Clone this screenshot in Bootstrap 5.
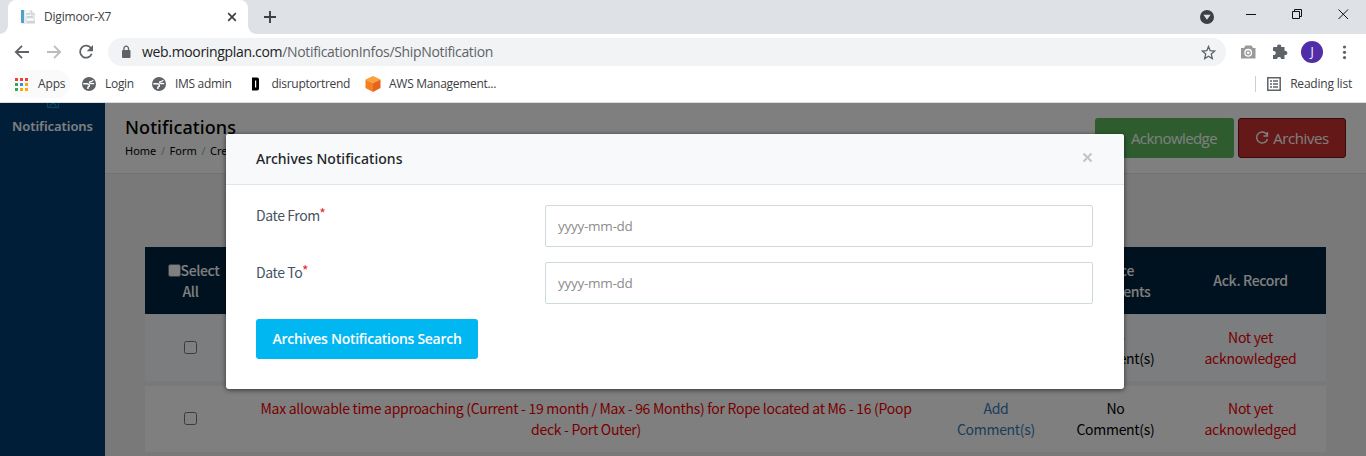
<!DOCTYPE html>
<html lang="en">
<head>
<meta charset="utf-8">
<meta name="viewport" content="width=device-width, initial-scale=1">
<title>Digimoor-X7</title>
<link href="https://cdn.jsdelivr.net/npm/bootstrap@5.3.0/dist/css/bootstrap.min.css" rel="stylesheet">
<style>
  :root { --ui: "Open Sans", "Noto Sans", sans-serif; --src: "Noto Sans CJK SC", "Noto Sans", sans-serif; --noto: "Noto Sans", "Open Sans", sans-serif; }
  html, body { height: 456px; overflow: hidden; }
  body { font-family: var(--src); font-size: 14px; line-height: 21px; color: #000; background: #fff; }
  svg { display: block; flex: none; }

  /* browser chrome */
  .chrome { font-family: var(--ui); font-size: 12px; line-height: 16px; color: #3c4043; height: 103px; border-bottom: 1px solid #dadce0; }
  .tabstrip { height: 34px; background: #dee1e6; padding-left: 8px; }
  .browser-tab { width: 240px; height: 34px; background: #fff; border-radius: 8px 8px 0 0; padding: 0 9px 0 12px; position: relative; }
  .browser-tab::before, .browser-tab::after { content: ""; position: absolute; bottom: 0; width: 8px; height: 8px; }
  .browser-tab::before { left: -8px; background: radial-gradient(circle at 0 0, #dee1e6 7.5px, #fff 8px); }
  .browser-tab::after { right: -8px; background: radial-gradient(circle at 100% 0, #dee1e6 7.5px, #fff 8px); }
  .tab-title { letter-spacing: -.2px; margin-left: 8px; }
  .new-tab { margin: 8px 0 0 15px; }
  .toolbar { height: 36px; }
  .omnibox { width: 1118px; height: 28px; margin-left: 12px; border-radius: 14px; background: #f1f3f4; padding: 0 10px 0 13px; }
  .url { font-size: 14px; color: #202124; margin-left: 11px; letter-spacing: -.33px; white-space: nowrap; }
  .url span { color: #5f6368; }
  .bookmarks { height: 32px; padding: 0 14px 4px; }
  .bookmarks span { white-space: nowrap; letter-spacing: -.3px; margin-left: 9px; }
  .bookmarks .apps-pill span { margin-left: 10px; letter-spacing: -.15px; }
  .apps-pill { width: 62px; height: 28px; border-radius: 14px; margin-left: -6px; padding-left: 7px; background: #fafafb; }
  .avatar { width: 22px; height: 22px; background: #512da8; color: #fff; line-height: 22px; }

  /* application */
  .viewport { position: relative; height: 353px; overflow: hidden; background: #f2f2f2; }
  .sidebar { width: 105px; height: 353px; background: #003c70; color: #fff; font: 600 13px/18px var(--noto); letter-spacing: -.05px; }
  .sidebar svg { margin: -6px auto 8px; }
  .page-head { height: 71px; background: #fff; border-bottom: 1px solid #e4e4e4; padding: 15px 20px 0; }
  .page-title { font: 500 18px/20px var(--noto); margin: -1px 0 0; letter-spacing: .08px; }
  .crumbs { font: 400 11px/16px var(--noto); margin-top: 6px; white-space: nowrap; }
  .crumbs i { font-style: normal; color: #aaa; padding: 0 4.6px; }
  .btn-app { height: 40px; font: 400 15px/20px var(--ui); color: #fff; border-radius: 3px; padding: 0; letter-spacing: -.4px; }
  .btn-ack { width: 139px; background: #5cb85c; letter-spacing: -.57px; }
  .btn-ack span { padding-left: 19px; }
  .btn-arch { width: 108px; background: #ca3030; border: 1px solid #7a1518; }
  .grid-table { width: 1181px; margin: 73px 0 0 40px; letter-spacing: -.29px; }
  .grid-line { display: grid; grid-template-columns: 91px 700px 120px 119px 151px; align-items: center; text-align: center; height: 66px; background: #fff; margin-bottom: 5px; padding-bottom: 1px; }
  .grid-line > div { padding: 0 14px; }
  .grid-head { background: #002440; color: #fff; font-weight: 500; height: 67px; margin-bottom: 1px; padding: 0; letter-spacing: -.36px; }
  .grid-head .pick-all { padding: 0 12px 0 18px; }
  .pick-all span { display: block; margin-left: -6px; }
  .tinted { background: #f9fafc; }
  .late { color: #f00000; }
  .tick { appearance: none; width: 13px; height: 13px; border: 1px solid #767676; border-radius: 2.5px; background: #fff; display: inline-block; vertical-align: -1px; margin: 0; }
  .shade { position: absolute; inset: 0; background: rgba(0,0,0,.5); }

  /* dialog */
  .dialog-box { position: absolute; left: 226px; top: 31px; width: 898px; height: 255px; background: #fff; border-radius: 3px; box-shadow: 0 1px 5px rgba(0,0,0,.6); overflow: hidden; }
  .dialog-head { height: 51px; background: #f8f9fb; border-bottom: 1px solid #e2e5e8; padding: 0 29px 0 30px; font: 500 14px/20px var(--noto); letter-spacing: .04px; color: #212529; }
  .dialog-head svg { margin-bottom: 4px; }
  .dialog-body { padding: 20px 31px 0 30px; }
  .field-line { height: 42px; margin-bottom: 15px; }
  .field-line label { width: 289px; color: #455364; letter-spacing: -.4px; }
  .field-line sup { color: #e8282c; font-size: 14px; top: -2px; line-height: 0; vertical-align: baseline; }
  .field-line input { width: 548px; height: 42px; border: 1px solid #cfdadd; border-radius: 2px; padding: 0 12px; font: 400 13.5px/20px var(--ui); letter-spacing: -.27px; box-shadow: none; }
  .field-line input::placeholder { color: #8b8d8f; opacity: 1; }
  .btn-find { width: 222px; height: 40px; background: #00b7f1; color: #fff; border: 0; border-radius: 3px; font: 600 14px/20px var(--ui); letter-spacing: -.28px; padding: 0; }
</style>
</head>
<body>
<div class="chrome">
  <div class="tabstrip d-flex">
    <div class="browser-tab d-flex align-items-center">
      <svg width="16" height="16" viewBox="0 0 16 16"><path d="M2 1h9l4 4v10H2z" fill="#e4e9ed"/><path d="M1 1h3v13H1z" fill="#4fa0cf"/><path d="M5 1h6v6H5z" fill="#f5f6f7"/><path d="M11 1v4h4" fill="none" stroke="#c5cdd3"/><path d="M6 5h4M7 8h6M7 13h8" fill="none" stroke="#b4bec6"/><path d="M7 9.500h6v2H7z" fill="#fff"/></svg>
      <span class="tab-title">Digimoor-X7</span>
      <svg class="ms-auto" width="14" height="14" viewBox="0 0 14 14"><path d="M3.200 3.200l7.600 7.600M10.800 3.200l-7.600 7.600" stroke="#3c4043" stroke-width="1.700"/></svg>
    </div>
    <svg class="new-tab" width="14" height="17" viewBox="0 0 14 17"><path d="M7 3v12M1 9h12" stroke="#3c4043" stroke-width="1.900"/></svg>
    <div class="ms-auto d-flex">
      <svg width="166" height="34" viewBox="0 0 166 34"><circle cx="7" cy="17" r="7" fill="#3c4043"/><path d="M3.400 14.800h7.200L7 19.800z" fill="#dee1e6"/><g fill="none" stroke="#111" stroke-width="1"><path d="M46 14.500h10M92.500 11.500h7v7h-7zM94.500 11.500v-2h7v7h-2M138.500 9.500l9.500 9.500M148 9.500L138.500 19"/></g></svg>
    </div>
  </div>
  <div class="toolbar d-flex align-items-center">
    <svg width="96" height="28" viewBox="0 0 96 28"><g fill="none" stroke-width="1.800"><path d="M29 14H16.500M22 7.800L15.800 14l6.200 6.200" stroke="#5f6368"/><path d="M47 14h12.500M54 7.800L60.200 14 54 20.200" stroke="#babcbe"/><path d="M91.200 10.500A6 6 0 1 0 91.700 15.800" stroke="#5f6368"/></g><path d="M93 7v6.300h-6.300z" fill="#5f6368"/></svg>
    <div class="omnibox d-flex align-items-center">
      <svg width="10" height="14" viewBox="0 0 10 14"><rect x="1" y="5" width="8.500" height="8" rx="1" fill="#5f6368"/><path d="M2.900 6V3.500a2.300 2.300 0 0 1 4.600 0V6" fill="none" stroke="#5f6368" stroke-width="1.300"/></svg>
      <div class="url">web.mooringplan.com<span>/NotificationInfos/ShipNotification</span></div>
      <svg class="ms-auto" width="15" height="15" viewBox="0 0 15 15"><path d="M7.500 1.500l1.700 4.200 4.500.4-3.400 3 1 4.500-3.800-2.400-3.800 2.400 1-4.500-3.400-3 4.500-.4z" fill="none" stroke="#5f6368" stroke-width="1.300"/></svg>
    </div>
    <svg width="75" height="28" viewBox="0 0 75 28"><path d="M15 10h3l1.500-2.500h6L27 10h2.500v10.500H15z" fill="#999"/><circle cx="22.200" cy="14.800" r="3.300" fill="none" stroke="#fff" stroke-width="1.300"/><circle cx="22.200" cy="14.800" r="1.400" fill="#fff"/><path d="M48 9h3.200a2 2 0 1 1 3.900 0H58.500v3.800a2.200 2.200 0 1 1 0 4.200v4h-3.400a2 2 0 0 0-4 0H47v-4a2.100 2.100 0 1 0 0-4V10a1 1 0 0 1 1-1z" fill="#5f6368"/></svg>
    <div class="avatar rounded-circle text-center">J</div>
    <svg width="43" height="28" viewBox="0 0 43 28"><g fill="#5f6368"><circle cx="21.500" cy="9" r="1.600"/><circle cx="21.500" cy="14.300" r="1.600"/><circle cx="21.500" cy="19.600" r="1.600"/></g></svg>
  </div>
  <div class="bookmarks d-flex align-items-center">
    <div class="apps-pill d-flex align-items-center">
      <svg width="13" height="13" viewBox="0 0 13 13"><path d="M0 0h3v3H0zM5 0h3v3H5zM10 0h3v3h-3z" fill="#ea4335"/><path d="M0 5h3v3H0zM0 10h3v3H0z" fill="#34a853"/><path d="M5 5h3v3H5z" fill="#4285f4"/><path d="M10 5h3v3h-3zM5 10h3v3H5zM10 10h3v3h-3z" fill="#fbab05"/></svg>
      <span>Apps</span>
    </div>
    <svg style="margin-left:12px" width="14" height="14" viewBox="0 0 14 14"><circle cx="7" cy="7" r="7" fill="#5f6368"/><path d="M11.300 3.200Q10 4.800 8 4.600 7 6 8.600 6.500l3.600.2" stroke="#fff" stroke-width="1.300" fill="none"/><path d="M1.300 6.800h3.900q2.800.4 2 2.500Q5.600 9.600 5.900 12" stroke="#fff" stroke-width="1.500" fill="none"/></svg>
    <span>Login</span>
    <svg style="margin-left:18px" width="14" height="14" viewBox="0 0 14 14"><circle cx="7" cy="7" r="7" fill="#5f6368"/><path d="M11.300 3.200Q10 4.800 8 4.600 7 6 8.600 6.500l3.600.2" stroke="#fff" stroke-width="1.300" fill="none"/><path d="M1.300 6.800h3.900q2.800.4 2 2.500Q5.600 9.600 5.900 12" stroke="#fff" stroke-width="1.500" fill="none"/></svg>
    <span>IMS admin</span>
    <svg style="margin-left:20px" width="8" height="14" viewBox="0 0 8 14"><path fill-rule="evenodd" d="M0 .5h5q2 0 2 2v9q0 2-2 2H0zM3 3.500v7h1.200v-7z" fill="#000"/></svg>
    <span style="margin-left:12px">disruptortrend</span>
    <svg style="margin-left:15px" width="16" height="16" viewBox="0 0 16 16"><path d="M8 0l7.500 3.500L8 7 .5 3.500z" fill="#f9a13a"/><path d="M.5 3.500L8 7v9L.5 12z" fill="#f58020"/><path d="M15.500 3.500L8 7v9l7.500-4z" fill="#e8631c"/></svg>
    <span style="margin-left:8px">AWS Management...</span>
    <div class="ms-auto d-flex align-items-center">
      <svg width="28" height="16" viewBox="0 0 28 16"><path d="M2.500 0v16" stroke="#ccced1"/><path d="M14.800 1.800h12.400v12.400H14.800z" fill="none" stroke="#5f6368" stroke-width="1.500"/><path d="M17 5h2M17 8h2M17 11h2M20 5h5M20 8h5M20 11h5" stroke="#5f6368" stroke-width="1.400"/></svg>
      <span style="letter-spacing:-.2px">Reading list</span>
    </div>
  </div>
</div>

<div class="viewport">
  <div class="d-flex">
    <nav class="sidebar text-center">
      <svg width="14" height="12" viewBox="0 0 14 12"><path d="M1.500 0v10.500h11V0M4 9.500c0-4 6-4 6 0M5.500 3.500l1.500 2 1.500-2" fill="none" stroke="#0a83c4" stroke-width="1.300"/></svg>
      <div>Notifications</div>
    </nav>
    <main class="flex-grow-1">
      <header class="page-head d-flex justify-content-between">
        <div>
          <h1 class="page-title">Notifications</h1>
          <div class="crumbs">Home<i>/</i>Form<i>/</i>Create</div>
        </div>
        <div class="d-flex gap-1">
          <button class="btn btn-app btn-ack"><span>Acknowledge</span></button>
          <button class="btn btn-app btn-arch d-flex align-items-center justify-content-center"><svg class="me-1" width="14" height="14" viewBox="0 0 14 14"><path d="M12 3.800A5.500 5.500 0 1 0 12.500 8M12.500 1v4H8.500" fill="none" stroke="#fff" stroke-width="1.400"/></svg>Archives</button>
        </div>
      </header>
      <section class="grid-table">
        <div class="grid-line grid-head"><div class="pick-all"><input class="tick" type="checkbox">Select <span>All</span></div><div></div><div></div><div>Office Comments</div><div>Ack. Record</div></div>
        <div class="grid-line tinted"><div><input class="tick" type="checkbox"></div><div></div><div></div><div>No Comment(s)</div><div class="late">Not yet acknowledged</div></div>
        <div class="grid-line"><div><input class="tick" type="checkbox"></div><div class="late">Max allowable time approaching (Current - 19 month / Max - 96 Months) for Rope located at M6 - 16 (Poop deck - Port Outer)</div><div style="color:#337ab7">Add Comment(s)</div><div>No Comment(s)</div><div class="late">Not yet acknowledged</div></div>
      </section>
    </main>
  </div>
  <div class="shade"></div>
  <div class="dialog-box" role="dialog">
    <div class="dialog-head d-flex align-items-center justify-content-between">
      <span>Archives Notifications</span>
      <svg width="15" height="15" viewBox="0 0 15 15"><path d="M3.500 3.500l8 8M11.500 3.500l-8 8" stroke="#c2c4c7" stroke-width="2"/></svg>
    </div>
    <form class="dialog-body">
      <div class="field-line d-flex"><label>Date From<sup>*</sup></label><input class="form-control" placeholder="yyyy-mm-dd"></div>
      <div class="field-line d-flex"><label>Date To<sup>*</sup></label><input class="form-control" placeholder="yyyy-mm-dd"></div>
      <button class="btn btn-find" type="button">Archives Notifications Search</button>
    </form>
  </div>
</div>
<script src="https://cdn.jsdelivr.net/npm/bootstrap@5.3.0/dist/js/bootstrap.bundle.min.js"></script>
</body>
</html>
